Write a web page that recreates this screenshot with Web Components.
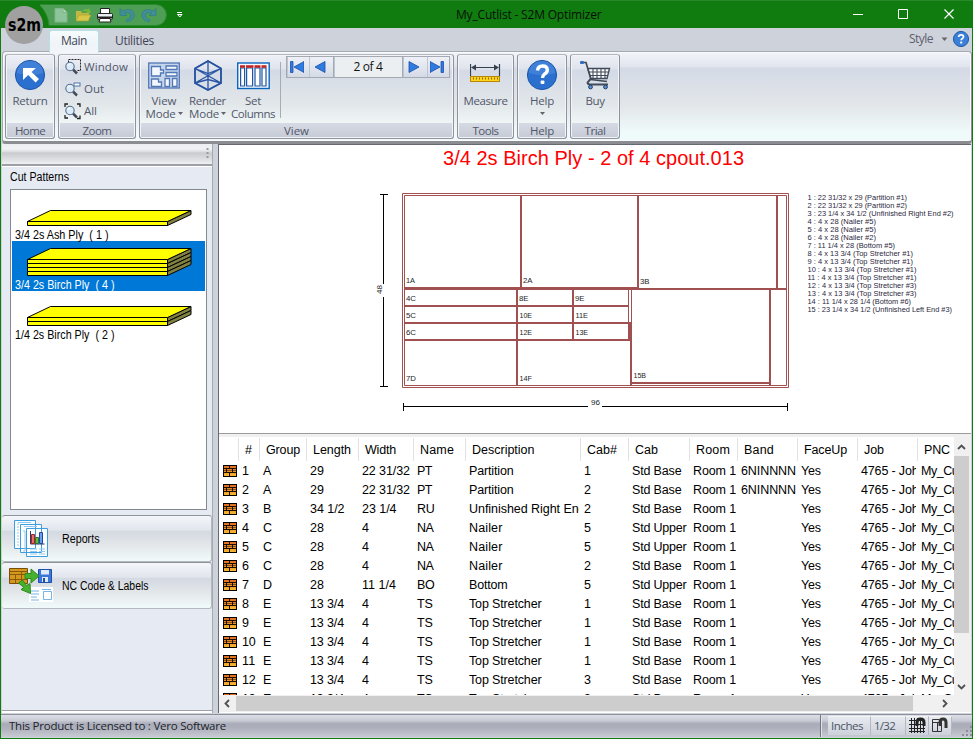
<!DOCTYPE html>
<html lang="en">
<head>
<meta charset="utf-8">
<title>My_Cutlist - S2M Optimizer</title>
<style>
html,body{margin:0;padding:0;width:973px;height:739px;overflow:hidden;background:#107c10}
</style>
</head>
<body>
<app-window></app-window>
<script>
const define=(name,html,setup)=>customElements.define(name,class extends HTMLElement{
  connectedCallback(){
    if(this.shadowRoot)return;
    const root=this.attachShadow({mode:'open'});
    root.innerHTML=typeof html==='function'?html(this):html;
    if(setup)setup(this,root);
  }
});

/* Text that fills the width in its "w" attribute: by tracking, or by condensing its glyphs when "narrow" is set. */
define('fit-text','<style>:host{display:inline-block;white-space:pre}span{display:inline-block;white-space:pre;transform-origin:0 50%}</style><span><slot></slot></span>',(el,root)=>{
  const w=parseFloat(el.getAttribute('w'));
  if(!w)return;
  const s=root.querySelector('span'),n=el.textContent.length,nat=s.getBoundingClientRect().width;
  if(el.hasAttribute('narrow')){s.style.transform=`scaleX(${(w/nat).toFixed(4)})`;el.style.width=w+'px';}
  else s.style.letterSpacing=((w-nat)/n).toFixed(3)+'px';
});

const UI='"Open Sans","Noto Sans",sans-serif';
const SANS='"Liberation Sans",Arial,sans-serif';

define('quick-bar',`<style>
:host{display:block;width:127px;height:21px;margin-left:40px}
svg{display:block}</style>
<svg width="150" height="22" viewBox="40 4 150 22">
<path d="M39 4.500H156a10.500 10.500 0 0 1 0 21H49Q48 13 39 4.500Z" fill="#4e9f55" stroke="#278a2c"/>
<path d="M55 8.500h8l4 4V22H55z" fill="#8ec49a" stroke="#7db68a"/><path d="M63 8.500v4h4" fill="#b1d8b8" stroke="#7db68a"/>
<path d="M76 21V11h5l1 2h7v8z" fill="#c2b83d"/><path d="M76 21l3-6h12l-3 6z" fill="#d9c747" stroke="#a3a036" stroke-width=".6"/><path d="M82 12q2-4 6-2.500l1-1.500 2 5-5 0 1-1.500q-2-1-5 .5z" fill="#72b83a"/>
<path d="M100.500 14V8.500h9V14" fill="#fff" stroke="#222"/><rect x="97.500" y="13.500" width="15" height="6" rx="1" fill="#e9edf2" stroke="#222"/><path d="M98 17.500h14" stroke="#222" stroke-width="2"/><path d="M100 18.500h10l1 3.500H99z" fill="#fff" stroke="#222"/>
<path d="M120 8.500v7h7l-2.700-2.400q4-1.500 6 .8 2 3.600-4.300 6.100l1 2q9-2.500 7-9-3-6-11.500-2z" fill="#428d9a" stroke="#2e8081" stroke-width=".7"/>
<path d="M156 8.500v7h-7l2.700-2.400q-4-1.500-6 .8-2 3.600 4.300 6.100l-1 2q-9-2.500-7-9 3-6 11.500-2z" fill="#428d9a" stroke="#2e8081" stroke-width=".7"/>
<path d="M177 12.500h5M177.500 14.500h4.500l-2.200 2.500z" stroke="#fff" fill="#2b872b"/>
</svg>`);

define('title-bar',`<style>
:host{display:flex;height:28px;background:#107c10;box-sizing:border-box;border-top:1px solid #28892c;font:12px ${UI};color:#061006}
quick-bar{margin-top:3px}
.title{margin-left:289px;line-height:27px}
.win{margin-left:auto;display:block}
</style><quick-bar></quick-bar><div class="title"><fit-text w="145.500">My_Cutlist - S2M Optimizer</fit-text></div>
<svg class="win" width="130" height="27" viewBox="843 1 130 27" fill="none" stroke="#fff"><path d="M853 14.500h10"/><path d="M898.500 9.500h9v9h-9z"/><path d="M944.500 9.500l9 9M953.500 9.500l-9 9" stroke-width="1.200"/></svg>`);

define('ribbon-tabs',`<style>
:host{display:flex;height:23px;background:#ced2db;font:12px/20px ${UI};color:#3f4656}
.main{margin:2px 0 0 48px;width:48px;height:22px;background:linear-gradient(#f7fbfd,#eef4f9 60%,#f3f5fa);border:1px solid #b7dfe6;border-bottom:0;border-radius:3px 3px 0 0;text-align:center;position:relative;box-sizing:content-box}
.main fit-text{line-height:20px}
.util{margin:3px 0 0 16px}
.style{margin:1px 4px 0 auto;color:#5c5f6d}
svg{display:block;margin-right:1px}
</style><div class="main"><fit-text w="26">Main</fit-text></div><div class="util"><fit-text w="39">Utilities</fit-text></div>
<div class="style"><fit-text w="24">Style</fit-text></div>
<svg width="34" height="23" viewBox="937 28 34 23"><path d="M941.500 37.500h6l-3 3.500z" fill="#666"/><circle cx="961" cy="39" r="7.600" fill="#3b80d8" stroke="#245ba8"/><path d="M958.600 37q.2-2.200 2.500-2.200 2.400 0 2.400 2 0 1.300-1.400 2-.9.500-.9 1.400" fill="none" stroke="#fff" stroke-width="1.700"/><rect x="960.200" y="41.600" width="2" height="1.900" fill="#fff"/></svg>`);

define('ribbon-group',el=>`<style>
:host{display:flex;flex-direction:column;box-sizing:border-box;height:85px;border:1px solid #8f929b;border-radius:3px;border-top-color:#b4b6be;box-shadow:inset 0 0 0 1px #f3f6f9;
background:linear-gradient(#eef0f6 0,#dfe3ec 14px,#d4dae6 15px,#e2e7ea 50px,#f0f6f6 68px,#d6dae4 68px,#c6cad6);width:${el.getAttribute('width')}px}
.body{flex:1;display:flex;min-height:0}
.cap{height:15px;text-align:center;font:11.500px/16px ${UI};color:#51576a}
</style><div class="body"><slot></slot></div><div class="cap"><fit-text w="${el.getAttribute('cw')}">${el.getAttribute('caption')}</fit-text></div>`);

define('tool-button',el=>`<style>
:host{display:flex;flex-direction:column;align-items:center;width:${el.getAttribute('width')}px;font:11.500px/13px ${UI};color:#51576a;padding-top:4px}
::slotted(svg){display:block;margin-bottom:-1px}
.r{display:flex;align-items:center;height:13px;gap:2px}
</style><slot></slot>${el.getAttribute('label').split('|').map(s=>{const[t,w,a]=s.split(':');return`<div class="r">${t?`<fit-text w="${w}">${t}</fit-text>`:''}${a?'<svg width="5" height="3"><path d="M0 0h5L2.500 3z" fill="#62656d"/></svg>':''}</div>`}).join('')}`);

define('zoom-row',el=>`<style>
:host{display:flex;height:22px;align-items:center;gap:3px;font:11.500px/22px ${UI};color:#51576a}svg{flex:none}</style>
<svg width="17" height="18" viewBox="0 0 17 18">
${({window:'<path d="M4.500 4.500v-3h12v11h-3" fill="none" stroke="#222" stroke-dasharray="2 1"/>',out:'<rect x="10" y="3" width="6" height="3" fill="#fff" stroke="#4674a5"/>',all:'<path d="M1 5V2h3M13 2h3v3M1 13v3h3M13 16.500h3v-3" fill="none" stroke="#222" stroke-width="1.300"/>'})[el.getAttribute('kind')]}
<path d="M9 11.500l4 4" stroke="#444b57" stroke-width="2.500"/><circle cx="6" cy="8.500" r="4.200" fill="#d9eaf8" stroke="#566d8d" stroke-width="1.100"/><path d="M4 8q.5-2 2.500-2" stroke="#fff" fill="none"/></svg>
<fit-text w="${el.getAttribute('w')}"><slot></slot>${el.getAttribute('label')}</fit-text>`);

define('page-nav',`<style>
:host{display:grid;grid-template-columns:22px 24px 70px 24px 22px;height:22px;margin:1px 0 0 5px;box-sizing:border-box;border:1px solid #a4a9b2;background:#e4e8ef;width:164px}
div{display:flex;align-items:center;justify-content:center;background:linear-gradient(#eef1f7,#d4dae6);box-shadow:inset 1px 0 #bfc5d0}
.t{background:#eceff2;border:solid #a4a9b2;border-width:0 1px;font:12px/18px ${UI};color:#111}
svg{width:14px;height:12px;margin-right:2px}path{fill:#2f7be0;stroke:#1b4fa8;stroke-width:.8}
</style><div><svg><path d="M.5.500h2.500v11H.5zM14 .5v11L4 6z"/></svg></div><div><svg><path d="M12 .5v11L2 6z"/></svg></div><div class="t"><fit-text w="29">2 of 4</fit-text></div><div><svg><path d="M2 .5v11L12 6z"/></svg></div><div><svg><path d="M11 .5h2.500v11H11zM0 .5v11L10 6z"/></svg></div>`);

define('main-ribbon',`<style>
:host{display:flex;gap:3px;height:93px;box-sizing:border-box;padding:2px 0 0 2px;margin-left:1px;border:1px solid #a5a9b3;border-right:1px solid #8d9099;border-bottom:3px solid #8b8d93;border-radius:4px;box-shadow:inset 0 0 0 1px #f8fafc;
background:linear-gradient(#f3f5fa 0,#e0e4ee 15px,#d4dae6 16px,#e3e7ea 55px,#effafa 80px)}
.col{display:flex;flex-direction:column;padding:1px 0 0 5px}
.sep{width:1px;margin:7px 0 5px 1px;background:#a7abb4}
</style>
<ribbon-group width="50" caption="Home" cw="30"><tool-button width="48" label="Return:35"><svg width="32" height="36" viewBox="0 0 32 36"><circle cx="16" cy="16" r="14.600" fill="#2c70cf" stroke="#1d55a8"/><path d="M3 14a13 12 0 0 1 26 0q-13 4-26 0z" fill="#5994e4" opacity=".45"/><path d="M9 9h13l-4.500 4 7.500 7-3.500 3.500-7.300-7.500L9 21z" fill="#fff"/></svg></tool-button></ribbon-group>
<ribbon-group width="78" caption="Zoom" cw="29"><div class="col"><zoom-row kind="window" label="Window" w="44"></zoom-row><zoom-row kind="out" label="Out" w="20"></zoom-row><zoom-row kind="all" label="All" w="13"></zoom-row></div></ribbon-group>
<ribbon-group width="315" caption="View" cw="25">
<tool-button width="48" label="View:25|Mode:30:a"><svg width="32" height="36" viewBox="0 -1 32 36" fill="#f3f7fd" stroke="#5277b5" stroke-width="1.300"><rect x=".7" y="3" width="30.600" height="25" fill="#c6d5eb"/><path d="M3.500 6.500h9v3.500h3v3h-3v3h-9zM18 6h11v3.500H18zM18 12.500h11V16H18zM3.500 19h7v3h3v4.500h-10zM17 18.500h4.500v8H17zM24.500 18.500H29v8h-4.500z"/></svg></tool-button>
<tool-button width="39" label="Render:37|Mode:30:a"><svg width="30" height="36" viewBox="0 -.5 30 36" fill="none" stroke="#2854a3" stroke-width="1.700"><path d="M15 1.500L28 9v14.500L15 30.500 2 23.500V9zM15 1.500v29M2 9l26 14.500M28 9L2 23.500M2 9l13 5 13-5M2 23.500L15 20l13 3.500" stroke-width="1.300"/><path d="M15 1.500L28 9v14.500L15 30.500 2 23.500V9z"/></svg></tool-button>
<tool-button width="52" label="Set:16|Columns:44"><svg width="33" height="36" viewBox="0 -1 33 36"><rect x=".7" y="3" width="31.500" height="25.500" fill="#f5faff" stroke="#0a65bd" stroke-width="1.400"/><g fill="#fff" stroke="#1f55a2" stroke-width="1.200"><path d="M3.600 8h4v18h-4zM9.600 8h6v18h-6zM18 8h5v18h-5zM25 8h4v18h-4z"/></g><path d="M3 6.500h5M9 6.500h7.500M17.500 6.500h6M24.500 6.500h5" stroke="#c32020" stroke-width="2.600"/></svg></tool-button>
<div class="sep"></div><page-nav></page-nav></ribbon-group>
<ribbon-group width="57" caption="Tools" cw="26"><tool-button width="55" label="Measure:44"><svg width="32" height="36" viewBox="1 2 32 36"><path d="M1.500 7v12M30.500 7v12M3 10.500h26" stroke="#35404f" stroke-width="1.200"/><path d="M2 10.500l5-3v6zM30 10.500l-5-3v6z" fill="#35404f"/><rect x="1.500" y="19.500" width="29" height="5" fill="#ffd51c" stroke="#b8860b"/><path d="M4 21.500h25" stroke="#8a6810" stroke-width="2" stroke-dasharray="1 2"/></svg></tool-button></ribbon-group>
<ribbon-group width="50" caption="Help" cw="24"><tool-button width="48" label="Help:24|::a"><svg width="32" height="36" viewBox="0 0 32 36"><circle cx="16" cy="16" r="14.600" fill="#2c70cf" stroke="#1d55a8"/><path d="M3 14a13 12 0 0 1 26 0q-13 4-26 0z" fill="#5994e4" opacity=".45"/><path d="M11.500 11.500q.5-4.500 5-4.500 4.800 0 4.800 4 0 2.500-3 4.300-1.800 1.200-1.800 3.700" fill="none" stroke="#fff" stroke-width="3.400"/><rect x="14.600" y="21.500" width="3.800" height="3.600" rx="1" fill="#fff"/></svg></tool-button></ribbon-group>
<ribbon-group width="50" caption="Trial" cw="21"><tool-button width="48" label="Buy:19"><svg width="32" height="36" viewBox="0 0 32 36"><path d="M3 3.500h4l5 17 16 2" fill="none" stroke="#404a5a" stroke-width="1.700"/><path d="M9 9.500h21.500l-2.500 10H12z" fill="#fff" stroke="#404a5a" stroke-width="1.400"/><path d="M10 13h19.500M11 16.500h17.500M14 10v9M18 10v9M22 10v9M26 10v9" stroke="#404a5a" stroke-width="1.100"/><path d="M12 19.500l-3.500 4q0 2 3 2h17.500" fill="none" stroke="#404a5a" stroke-width="1.900"/><g fill="#5b8ed3" stroke="#263f68"><circle cx="11.500" cy="28" r="1.900"/><circle cx="26.500" cy="28" r="1.900"/></g><rect x="1" y="2" width="4" height="3" rx="1" fill="#356cc0"/></svg></tool-button></ribbon-group>`);

define('board-item',el=>{
  const n=+el.getAttribute('layers'),b=35,t=b-4*n,p=[];
  for(let i=0;i<n;i++){const y=t+4*i;
    p.push(`<path d="M15.500 ${y-.5}h140v4h-140z" fill="#ff0"/><path d="M155.500 ${y-.5}l23.500-11v4l-23.500 11z" fill="#808040"/>`);}
  return`<style>:host{display:block;height:50px;font:12.500px/13px ${SANS};color:#000}
  :host([selected]){background:#0078d7;color:#fff}svg{display:block}fit-text{margin-left:2.500px;height:12px}</style>
  <svg width="193" height="38" stroke="#000" stroke-width="1">${p.join('')}<path d="M15.500 ${t-.5}L38.500 ${t-11.500}H179L155.500 ${t-.5}z" fill="#ff0"/></svg><fit-text narrow w="${el.getAttribute('w')}">${el.getAttribute('label')}</fit-text>`});

define('panel-button',`<style>
:host{display:flex;align-items:center;height:47px;box-sizing:border-box;border:1px solid #b4b8c0;border-top-color:#8f939b;border-left:0;border-radius:3px;font:12.500px/14px ${SANS};color:#000;
background:linear-gradient(#f4f6fa,#e1e5ec 32%,#d3d8e2 33%,#e3e7e9 65%,#f1fafa)}
.i{width:60px;height:45px}</style><div class="i"><slot name="icon"></slot></div><slot></slot>`);

define('side-panel',`<style>
:host{display:flex;flex-direction:column;width:210px;background:#e6eaf3;font:12.500px/14px ${SANS};color:#000;border-right:1px solid #a6a9b0}
.grip{height:20px;background:linear-gradient(#eceef1,#f1f2f4 25%,#dcdee1 38%,#c9cbcf 45%,#dfe1e4 80%,#eff0f2);border-bottom:2px solid #9da0a7;box-shadow:0 1px #fff;text-align:right;flex:none}
h2{font:inherit;margin:4px 0 5px 8px;height:14px}
.list{margin:0 5px 0 8px;border:1px solid #848890;height:318px;background:#fff;padding:1px 1px 0;flex:none}
.btns{margin-top:5px}
.foot{margin-top:auto;height:2px;border-top:1px solid #9da0a7;background:#fff}
</style><div class="grip"><svg width="8" height="19"><path d="M3.500 4v12" stroke="#9a9ca2" stroke-width="2" stroke-dasharray="2 2"/></svg></div>
<h2><fit-text narrow w="59">Cut Patterns</fit-text></h2>
<div class="list"><board-item layers="1" w="93.500" label="3/4 2s Ash Ply  ( 1 )"></board-item><board-item selected layers="4" w="99.500" label="3/4 2s Birch Ply  ( 4 )"></board-item><board-item layers="2" w="99.500" label="1/4 2s Birch Ply  ( 2 )"></board-item></div>
<div class="btns"><panel-button><svg slot="icon" width="60" height="45" viewBox="2 517 60 45"><g fill="#fff" stroke="#3d9fe0"><path d="M14.500 521.500h21v28h-21zM20.500 525.500h21v28h-21zM26.500 529.500h21v28h-21z"/></g><path d="M17 525h2M17 528h2M17 531h2M17 534h2M17 537h2M17 540h2M17 543h2M17 546h2M18 523.500h13M24 527.500h13M23 532h2v20h-2M30 550h7M30 552.500h7M30 555h7M39 550h6M39 552.500h6M39 555h6" fill="none" stroke="#8fc8f2"/><path d="M30.500 532v13h14" fill="none" stroke="#223a6a"/><path d="M31.500 535.500h3v9h-3z" fill="#ef6a6a" stroke="#a22"/><path d="M35.500 538.500h3v6h-3z" fill="#5bbf45" stroke="#287a1c"/><path d="M39.500 533.500h3v11h-3z" fill="#6b9df0" stroke="#1d48a6"/></svg><fit-text narrow w="37.500">Reports</fit-text></panel-button>
<panel-button><svg slot="icon" width="60" height="45" viewBox="2 563 60 45"><path d="M9.500 568.500h18v15h-18z" fill="#d4981c" stroke="#7a4e08"/><path d="M10 571.500h17M10 574.500h17M10 579.500h17M15.500 574v9M21.500 571v12" stroke="#8a5a0a"/><path d="M38.500 569.500h13v13h-13z" fill="#3c77d8" stroke="#1e4eaa"/><path d="M41 570h8v4.500h-8zM42 577h6v5h-6z" fill="#dfeafa"/><path d="M43 578h2v4h-2z" fill="#1e4eaa"/><path d="M29 587h24v15H29z" fill="#fff"/><path d="M31 591h8M31 594h8M31 597h6M31 600h8M43.500 591.500h8v8h-8zM42 589.500h9" fill="none" stroke="#79b4e8"/><path d="M25 573.500h6v-4.500l8 7-8 7v-4.500h-6z" fill="#47b02f" stroke="#2e8a1b"/><path d="M18.500 583l4-3 4 5.500 3.500-2 .5 10-9.500-4 3-2z" fill="#47b02f" stroke="#2e8a1b"/></svg><fit-text narrow w="86.500">NC Code &amp; Labels</fit-text></panel-button></div><div class="foot"></div>`);

define('cut-diagram',()=>{
  const labels=[['1A',406,283,9],['2A',523,283,9.500],['3B',640,284,9.500],['4C',406,301,10],['5C',406,318,10],['6C',406,335,10],['7D',406,381,10],['8E',519,301,9.500],['9E',575,301,9.500],['10E',519.500,318,12.500],['11E',575.500,318,12.500],['12E',519.500,335,12.500],['13E',575.500,335,12.500],['14F',519.500,381,12.500],['15B',633.500,378,12.500],['96',591,405,9]];
  const legend=[['22 31/32 x 29 (Partition #1)',99.500],['22 31/32 x 29 (Partition #2)',99.500],['23 1/4 x 34 1/2 (Unfinished Right End #2)',146],['4 x 28 (Nailer #5)',68.500],['4 x 28 (Nailer #5)',68.500],['4 x 28 (Nailer #2)',68.500],['11 1/4 x 28 (Bottom #5)',87.500],['4 x 13 3/4 (Top Stretcher #1)',105.500],['4 x 13 3/4 (Top Stretcher #1)',105.500],['4 x 13 3/4 (Top Stretcher #1)',109],['4 x 13 3/4 (Top Stretcher #1)',109],['4 x 13 3/4 (Top Stretcher #3)',109],['4 x 13 3/4 (Top Stretcher #3)',109],['11 1/4 x 28 1/4 (Bottom #6)',103.500],['23 1/4 x 34 1/2 (Unfinished Left End #3)',144.500]];
  return`<style>:host{display:block;height:288px;background:#fff}svg{display:block}text{font:8px ${SANS};fill:#1d1d26}.h{font-size:20px;fill:#f00}.lg{fill:#2b2840}</style>
<svg width="752" height="288" viewBox="219 145 752 288">
<text class="h" x="443" y="165" textLength="301">3/4 2s Birch Ply - 2 of 4 cpout.013</text>
<g fill="none" stroke="#a05050"><path d="M402.500 193.500h386v194h-386zM404.500 195.500h382v190h-382z"/>
<path stroke-width="2" d="M521 195v93M638 195v94M777 195v94M404 289h383M517 289v97M573 289v51M404 306h225M404 323h227M404 340h228M631 340v46M631 383h139M770 289v97"/><path d="M404 287.500h235M628.500 289v51M631.500 289v51"/><path stroke-width="3" d="M630 323v18"/></g>
<path d="M383.500 194v90M383.500 297v89M380 194.500h8M380 386.500h8M403.500 403v8M787.500 403v8M403 406.500h185M602 406.500h185" stroke="#000"/>
<text transform="translate(382 294) rotate(-90)" textLength="9" lengthAdjust="spacingAndGlyphs">48</text>
${labels.map(([t,x,y,w])=>`<text x="${x}" y="${y}" textLength="${w}" lengthAdjust="spacingAndGlyphs">${t}</text>`).join('')}
${legend.map(([t,w],i)=>`<text class="lg" x="807.500" y="${200+8*i}" textLength="${w}" lengthAdjust="spacingAndGlyphs">${i+1} : ${t}</text>`).join('')}
</svg>`});

define('part-table',()=>{
  const head=[['#',7],['Group',34],['Length',38],['Width',31],['Name',34],['Description',62.500],['Cab#',30],['Cab',23],['Room',34],['Band',30],['FaceUp',43],['Job',20],['PNC',26]];
  const W={'Partition':44.500,'22 31/32':48,'34 1/2':34.500,'23 1/4':34.500,'11 1/4':34,'13 3/4':34,'29':14,'28':14,'Std Base':49.500,'Std Upper':54.500,'Room 1':43,'Yes':20,'6NINNNN':55,'4765 - Joh':57.500,'My_Cutlist':53.500,'Nailer':33.500,'Bottom':38.500,'Top Stretcher':72.500,'Unfinished Right End':116.500,'PT':15,'RU':17.500,'NA':16.500,'BO':17.500,'TS':15.500,'10':13.500,'11':13.500,'12':13.500,'13':13.500};
  const rows='A|29|22 31/32|PT|Partition|1|Base|b;A|29|22 31/32|PT|Partition|2|Base|b;B|34 1/2|23 1/4|RU|Unfinished Right End|2|Base|;C|28|4|NA|Nailer|5|Upper|;C|28|4|NA|Nailer|5|Upper|;C|28|4|NA|Nailer|2|Base|;D|28|11 1/4|BO|Bottom|5|Upper|;E|13 3/4|4|TS|Top Stretcher|1|Base|;E|13 3/4|4|TS|Top Stretcher|1|Base|;E|13 3/4|4|TS|Top Stretcher|1|Base|;E|13 3/4|4|TS|Top Stretcher|1|Base|;E|13 3/4|4|TS|Top Stretcher|3|Base|;E|13 3/4|4|TS|Top Stretcher|3|Base|'.split(';').map((r,i)=>{const c=r.split('|');return[String(i+1),...c.slice(0,6),'Std '+c[6],'Room 1',c[7]?'6NINNNN':'','Yes','4765 - Joh','My_Cutlist']});
  const cell=t=>`<div class="c">${t?`<fit-text w="${W[t]||''}">${t}</fit-text>`:''}</div>`;
  const icon='<svg width="19" height="19" viewBox="0 0 19 19"><defs><linearGradient id="g" x2="0" y2="1"><stop stop-color="#e0681c"/><stop offset="1" stop-color="#f8bc30"/></linearGradient></defs><rect x="4.500" y="3.500" width="13" height="11" fill="url(#g)" stroke="#000"/><path d="M5 6.500h12M5 10.500h12" stroke="#1a0c00"/><path d="M5 8.500h12" stroke="#1a0c00" stroke-width=".5"/><path d="M10.500 4v2M7.500 7v3M13.500 7v3M10.500 11v3" stroke="#1a0c00"/></svg>';
  return`<style>
:host{display:grid;grid-template:258px 17px/735px 17px;height:275px;background:#fff;font:12.500px/19px ${SANS};color:#000}
.view{overflow:hidden}
.row{display:grid;grid-template-columns:19px 21px 47px 52px 55px 52px 115px 48px 61px 48px 60px 60px 60px 37px;height:19px}
.c{overflow:hidden;padding-left:4px;margin-right:1px;white-space:nowrap;height:19px}
.row:not(.head) .c:last-child{margin-right:0}
.head{height:24px;padding-top:1px;line-height:24px}.head .c{height:23px;padding-left:6px;margin:0;border-left:1px solid #e2e2e2}
.head .c:first-child{border:0}svg{display:block}
.v,.h,.corner{background:#f0f0f0}
</style><div class="view"><div class="row head"><div class="c"></div>${head.map(([t,w])=>`<div class="c"><fit-text w="${w}">${t}</fit-text></div>`).join('')}</div>
${rows.map(r=>`<div class="row">${icon}${r.map(cell).join('')}</div>`).join('')}</div>
<svg class="v" width="17" height="258" viewBox="954 437 17 258"><rect x="954" y="456" width="15" height="177" fill="#cdcdcd"/><path d="M958 449l3.500-3.500 3.500 3.500M958 685l3.500 3.500 3.500-3.500" fill="none" stroke="#505050" stroke-width="1.800"/></svg>
<svg class="h" width="735" height="17" viewBox="219 695 735 17"><rect x="236" y="696" width="677" height="15" fill="#cdcdcd"/><path d="M229 700l-3.500 3.500 3.500 3.500M943 700l3.500 3.500-3.500 3.500" fill="none" stroke="#505050" stroke-width="1.800"/></svg><div class="corner"></div>`});

define('status-bar',`<style>
:host{display:flex;height:23px;margin-top:1px;border-top:1px solid #8d8f9b;box-sizing:border-box;background:linear-gradient(#dcdfe6,#c9ccd5 25%,#a9abb8 40%,#aeb1bc 60%,#c8cbd3);font:11.500px/22px ${UI};color:#20242c}
.l{margin-left:8px}.sep{margin-left:auto;width:1px;background:#73767f;border-right:1px solid #e0e3e8}
.box{display:grid;grid-template-columns:43px 35px 23px 23px;height:18px;margin:1px 9px 0 6px;line-height:18px;color:#4d5365}
.box div{background:linear-gradient(#e7eaf0,#cdd1da);border-right:1px solid #b5b8c1;padding-left:3px;border-top:1px solid #f5f5f7}
svg{display:block}
</style><div class="l"><fit-text w="217">This Product is Licensed to : Vero Software</fit-text></div><div class="sep"></div>
<div class="box"><div><fit-text w="32">Inches</fit-text></div><div><fit-text w="21">1/32</fit-text></div><div><svg width="18" height="17" fill="none" stroke="#222"><path d="M0 3.500h16M0 7.500h16M0 11.500h16M0 14.500h16M2.500 1v15M5.500 1v15M8.500 1v15M11.500 1v15M14.500 8v8"/><path d="M8 9V5.500q0-3.500 3.500-3.500T15 5.500V9" stroke-width="3"/></svg></div><div><svg width="18" height="17" fill="none" stroke="#333"><path d="M.5 2.500h7M.5 2.500v12h9v-12M0 5.500h9M5.500 5v9"/><path d="M8 9V5.500q0-3.500 3-3.500t3 3.500V11" stroke-width="3"/></svg></div></div>
<svg width="11" height="22" fill="#8b8e98"><path d="M9 11h2v2H9zM5 15h2v2H5zM9 15h2v2H9zM1 19h2v2H1zM5 19h2v2H5zM9 19h2v2H9z"/></svg>`);

define('app-window',`<style>
:host{display:flex;flex-direction:column;width:973px;height:739px;position:relative;background:#107c10;overflow:hidden}
.in{margin:0 1px;height:710px;background:#ced2db;display:flex;flex-direction:column;position:relative}
.work{display:flex;height:569px;padding-left:1px}
.right{margin-left:5px;width:752px;border:solid #66696f;border-width:1px 0 0 1px;background:#fff}
.split{height:4px;box-sizing:border-box;border-top:1px solid #9b9b9b;background:#f0f0f0}
.orb{position:absolute;left:5px;top:6px;width:38px;height:38px;border-radius:50%;background:#a0a0a0;font:bold 17px/38px "DejaVu Sans",sans-serif;color:#000;text-align:center}
</style><title-bar></title-bar><div class="in"><ribbon-tabs></ribbon-tabs><main-ribbon></main-ribbon><div class="work"><side-panel></side-panel><div class="right"><cut-diagram></cut-diagram><div class="split"></div><part-table></part-table></div></div><status-bar></status-bar></div>
<div class="orb"><fit-text narrow w="33">s2m</fit-text></div>`);
</script>
</body>
</html>
